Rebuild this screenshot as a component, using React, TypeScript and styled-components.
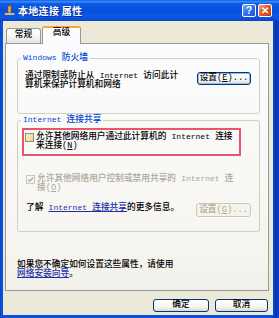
import React from "react";
import styled, { createGlobalStyle } from "styled-components";

const GlobalStyle = createGlobalStyle`
  html, body {
    margin: 0;
    padding: 0;
    background: #ffffff;
  }
  body {
    width: 279px;
    height: 318px;
    overflow: hidden;
    font-family: "Liberation Mono", "Noto Sans CJK SC", monospace;
    font-size: 8.7px;
    font-weight: 500;
    color: #000;
  }
`;

const Window = styled.div`
  width: 279px;
  height: 318px;
  display: flex;
  flex-direction: column;
`;

const TitleBar = styled.div`
  height: 21px;
  flex: none;
  display: flex;
  align-items: center;
  padding: 0 7px 0 4px;
  background: linear-gradient(
    #0a5fe8 0%,
    #3a8cf6 8%,
    #0d5ae6 18%,
    #0a4fdc 50%,
    #0b58e8 80%,
    #0744c4 100%
  );
`;

const TitleText = styled.span`
  flex: 1;
  margin-left: 3px;
  font-family: "Noto Sans CJK SC", sans-serif;
  font-size: 10px;
  font-weight: 700;
  color: #fff;
  letter-spacing: 0.3px;
  text-shadow: 1px 1px 0 #0b2a8a;
`;

const CaptionButton = styled.div<{ $tone: "help" | "close" }>`
  width: 14px;
  height: 13px;
  margin-left: 2px;
  box-sizing: border-box;
  border: 1px solid #fff;
  border-radius: 2px;
  display: flex;
  align-items: center;
  justify-content: center;
  color: #fff;
  font-family: "Liberation Sans", sans-serif;
  font-weight: 700;
  font-size: 10px;
  background: ${(p) =>
    p.$tone === "help"
      ? "linear-gradient(135deg, #7fb0fb, #2e6ff0 50%, #1e55d4)"
      : "linear-gradient(135deg, #f0a080, #e0542c 50%, #c43a16)"};
`;

const Frame = styled.div`
  flex: 1;
  display: flex;
  padding: 0 6px 3px 3px;
  background: linear-gradient(90deg, #0a48d2 0, #0b52e0 3px, #0b52e0 273px, #0736b8 275px, #0a3fc2 279px);
`;

const Body = styled.div`
  flex: 1;
  display: flex;
  flex-direction: column;
  background: #ece9d8;
  padding: 5px 4px 0 2px;
`;

const TabRow = styled.div`
  height: 17px;
  display: flex;
  align-items: flex-end;
  padding-left: 1px;
`;

const Tab = styled.div<{ $active?: boolean }>`
  position: relative;
  z-index: ${(p) => (p.$active ? 1 : 0)};
  box-sizing: border-box;
  width: ${(p) => (p.$active ? 39 : 35)}px;
  height: ${(p) => (p.$active ? 18 : 15)}px;
  margin-left: ${(p) => (p.$active ? 1 : 0)}px;
  margin-bottom: ${(p) => (p.$active ? -1 : 0)}px;
  border: 1px solid #919b9c;
  border-bottom: none;
  border-top: ${(p) => (p.$active ? "2px solid #f5a83a" : "1px solid #919b9c")};
  border-radius: 3px 3px 0 0;
  background: ${(p) =>
    p.$active ? "#fcfcfe" : "linear-gradient(#ffffff, #f4f4f0 60%, #e4e3dc)"};
  display: flex;
  justify-content: center;
  padding-top: ${(p) => (p.$active ? 1 : 2)}px;
  line-height: 9px;
`;

const Panel = styled.div`
  height: 248px;
  box-sizing: border-box;
  border: 1px solid #919b9c;
  background: linear-gradient(#fcfcfe, #f6f5f0 80%, #f1f0ea);
  display: flex;
  flex-direction: column;
  padding: 0 8px 11px 11px;
`;

const Group = styled.fieldset<{ $gap: number; $pad: string }>`
  margin: ${(p) => p.$gap}px 0 0 0;
  padding: ${(p) => p.$pad};
  border: 1px solid #d0d0bf;
  border-radius: 3px;
  min-inline-size: 0;
`;

const Legend = styled.legend<{ $shift: number }>`
  padding: 0 2px;
  margin-left: ${(p) => p.$shift}px;
  line-height: 11px;
  color: #0046d5;
`;

const En = styled.span`
  font-family: "Liberation Mono", monospace;
  font-size: 8px;
`;

const Lines = styled.div<{ $tone?: "normal" | "disabled" }>`
  white-space: nowrap;
  line-height: 9px;
  color: ${(p) => (p.$tone === "disabled" ? "#aca899" : "#000")};
`;

const SpreadRow = styled.div<{ $gap?: number }>`
  display: flex;
  justify-content: space-between;
  align-items: flex-start;
  margin-top: ${(p) => p.$gap ?? 0}px;
`;

const Button = styled.div<{ $w: number; $h?: number; $disabled?: boolean; $focused?: boolean }>`
  width: ${(p) => p.$w}px;
  height: ${(p) => p.$h ?? 13}px;
  box-sizing: border-box;
  flex: none;
  border: 1px solid ${(p) => (p.$disabled ? "#c9c7ba" : "#003c74")};
  border-radius: 3px;
  background: ${(p) =>
    p.$disabled ? "#f5f4ea" : "linear-gradient(#ffffff, #f3f3ef 70%, #d9d6cb)"};
  box-shadow: ${(p) => (p.$focused ? "inset 0 0 0 1px #98b8f0" : "none")};
  color: ${(p) => (p.$disabled ? "#aca899" : "#000")};
  display: flex;
  align-items: center;
  justify-content: center;
  line-height: 9px;
  white-space: nowrap;
`;

const Highlight = styled.div`
  margin: 2px 10px 0 -4px;
  border: 2px solid #e6566c;
  padding: 2px 0 3px 1px;
`;

const CheckRow = styled.div<{ $gap?: number }>`
  display: flex;
  align-items: flex-start;
  gap: 2px;
  margin-top: ${(p) => p.$gap ?? 0}px;
`;

const Box = styled.div<{ $disabled?: boolean }>`
  width: 9px;
  height: 9px;
  box-sizing: border-box;
  flex: none;
  margin-top: 0.5px;
  border: 1px solid ${(p) => (p.$disabled ? "#cac8bb" : "#8e8f7c")};
  background: ${(p) =>
    p.$disabled ? "#f6f5ef" : "linear-gradient(135deg, #f4ecc4, #ecd98c)"};
  display: flex;
  align-items: center;
  justify-content: center;
`;

const Link = styled.span`
  color: #1c2fa6;
  text-decoration: underline;
`;

const Note = styled.div`
  margin-top: auto;
  line-height: 9px;
  white-space: nowrap;
`;

const Footer = styled.div`
  display: flex;
  justify-content: flex-end;
  gap: 6px;
  padding: 8px 1px 0 0;
`;

const NetIcon = () => (
  <svg width="11" height="11" viewBox="0 0 11 11">
    <rect x="4" y="1" width="3" height="7" fill="#f0b030" stroke="#8a5a10" strokeWidth="0.6" />
    <rect x="0.5" y="8" width="10" height="2" fill="#e8e4d0" stroke="#5a5a50" strokeWidth="0.6" />
  </svg>
);

const Check = () => (
  <svg width="7" height="7" viewBox="0 0 7 7">
    <polyline points="1,3.5 2.8,5.3 6,1.5" fill="none" stroke="#b2b0a2" strokeWidth="1.4" />
  </svg>
);

export default function App() {
  return (
    <>
      <GlobalStyle />
      <Window>
        <TitleBar>
          <NetIcon />
          <TitleText>本地连接 属性</TitleText>
          <CaptionButton $tone="help">?</CaptionButton>
          <CaptionButton $tone="close">✕</CaptionButton>
        </TitleBar>
        <Frame>
          <Body>
            <TabRow>
              <Tab>常规</Tab>
              <Tab $active>高级</Tab>
            </TabRow>
            <Panel>
              <Group $gap={8} $pad="7px 8px 23px 7px">
                <Legend $shift={-4}>
                  <En>Windows</En> 防火墙
                </Legend>
                <SpreadRow>
                  <Lines>
                    通过限制或防止从 <En>Internet</En> 访问此计
                    <br />
                    算机来保护计算机和网络
                  </Lines>
                  <Button $w={54} $focused style={{ marginTop: 1 }}>
                    设置(<u>E</u>)...
                  </Button>
                </SpreadRow>
              </Group>
              <Group $gap={0} $pad="0 8px 14px 8px">
                <Legend $shift={-5}>
                  <En>Internet</En> 连接共享
                </Legend>
                <Highlight>
                  <CheckRow>
                    <Box />
                    <Lines>
                      允许其他网络用户通过此计算机的 <En>Internet</En> 连接
                      <br />
                      来连接(<u>N</u>)
                    </Lines>
                  </CheckRow>
                </Highlight>
                <CheckRow $gap={18}>
                  <Box $disabled>
                    <Check />
                  </Box>
                  <Lines $tone="disabled">
                    允许其他网络用户控制或禁用共享的 <En>Internet</En> 连
                    <br />
                    接(<u>O</u>)
                  </Lines>
                </CheckRow>
                <SpreadRow $gap={10}>
                  <Lines>
                    了解 <Link><En>Internet</En> 连接共享</Link>的更多信息。
                  </Lines>
                  <Button $w={55} $h={14} $disabled>
                    设置(<u>G</u>)...
                  </Button>
                </SpreadRow>
              </Group>
              <Note>
                如果您不确定如何设置这些属性，请使用
                <br />
                <Link>网络安装向导</Link>。
              </Note>
            </Panel>
            <Footer>
              <Button $w={56}>确定</Button>
              <Button $w={53}>取消</Button>
            </Footer>
          </Body>
        </Frame>
      </Window>
    </>
  );
}
